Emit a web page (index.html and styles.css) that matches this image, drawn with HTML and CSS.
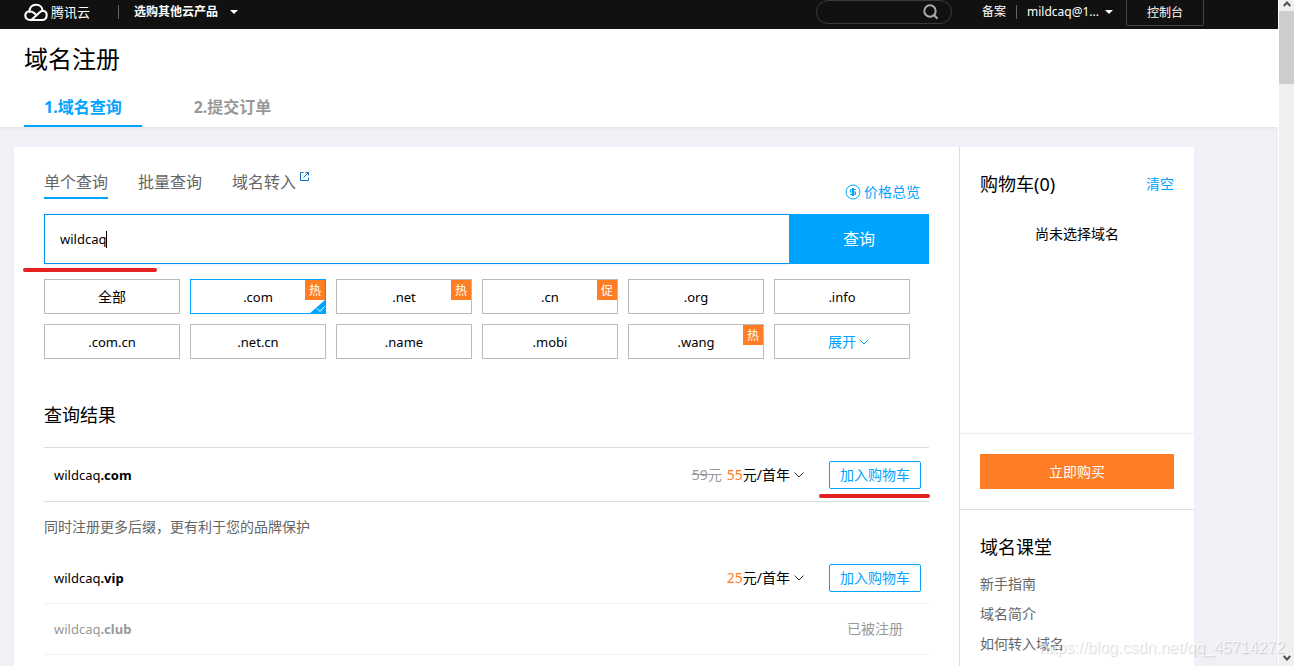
FILE: index.html
```html
<!DOCTYPE html>
<html lang="zh-CN">
<head>
<meta charset="utf-8">
<meta name="viewport" content="width=device-width, initial-scale=1">
<title>域名注册</title>
<link rel="stylesheet" href="styles.css">
</head>
<body>
<div class="window">
  <div class="page">
    <header class="topbar">
      <a class="brand" href="#">
        <svg class="brand-cloud" viewBox="0 0 24 19" width="24" height="19" fill="none" stroke="#fff" stroke-width="2.1" stroke-linecap="round" stroke-linejoin="round"><path d="M5.500 9C5.300 4.500 8 1.700 12 1.700s6.400 2.800 6.500 6.100c2.600.2 4.200 2 4.200 4.500 0 2.700-2 4.700-4.700 4.700H6.200c-2.900 0-4.900-1.800-4.900-4.400C1.300 10 3 8.300 5.700 8.200c2.200 0 3.600 1 5 2.400l1.800 1.800M7.500 16.700l8.300-7.400c.8-.8 1.600-1.200 2.700-1.500"/></svg>
        <span>腾讯云</span>
      </a>
      <button class="products" type="button">选购其他云产品 <i class="caret-down"></i></button>
      <form class="site-search">
        <input type="search" aria-label="搜索">
        <svg viewBox="0 0 16 16" width="16" height="16" fill="none" stroke="#aaa" stroke-width="2"><circle cx="7" cy="7" r="5.700"/><path d="M11 11l3.500 3.700"/></svg>
      </form>
      <a class="top-link" href="#">备案</a>
      <button class="account" type="button">mildcaq@1... <i class="caret-down"></i></button>
      <a class="console" href="#">控制台</a>
    </header>

    <section class="page-head">
      <h1>域名注册</h1>
      <ol class="steps">
        <li class="step active">1.域名查询</li>
        <li class="step">2.提交订单</li>
      </ol>
    </section>

    <div class="panel">
      <main class="main">
        <div class="main-head">
          <nav class="modes">
            <a class="mode active" href="#">单个查询</a>
            <a class="mode" href="#">批量查询</a>
            <a class="mode" href="#">域名转入<svg class="external" viewBox="0 0 9 9" width="9" height="9" fill="none" stroke="#0a72c8"><path d="M3.500.5h-3v8h8v-3M5.500.5h3v3M8.500.5L3.500 5.500"/></svg></a>
          </nav>
          <a class="price-link" href="#"><svg viewBox="0 0 16 16" width="16" height="16" fill="none" stroke="#00a4ff"><circle cx="8" cy="8" r="7"/><path d="M11 5.500H5.500v2.500M5 8h6M10.500 8v2.500H5M7.500 4v8M8.500 4v8"/></svg>价格总览</a>
        </div>

        <form class="query">
          <input class="query-input" type="text" value="wildcaq" aria-label="域名">
          <i class="text-caret"></i>
          <button class="query-button" type="button">查询</button>
          <i class="mark mark-query"></i>
        </form>

        <div class="suffixes">
          <button class="suffix" type="button"><span class="zh">全部</span></button>
          <button class="suffix selected" type="button">.com<span class="badge">热</span><svg class="tick" viewBox="0 0 17 15" width="17" height="15"><path d="M17 0v15H0z" fill="#00a4ff"/><path d="M8 9.500l3 3L15.500 7.500" fill="none" stroke="#fff"/></svg></button>
          <button class="suffix" type="button">.net<span class="badge">热</span></button>
          <button class="suffix" type="button">.cn<span class="badge">促</span></button>
          <button class="suffix" type="button">.org</button>
          <button class="suffix" type="button">.info</button>
          <button class="suffix" type="button">.com.cn</button>
          <button class="suffix" type="button">.net.cn</button>
          <button class="suffix" type="button">.name</button>
          <button class="suffix" type="button">.mobi</button>
          <button class="suffix" type="button">.wang<span class="badge">热</span></button>
          <button class="suffix more" type="button"><span class="zh">展开</span><svg viewBox="0 0 10 6" width="10" height="6" fill="none" stroke="currentColor"><path d="M.5.5L5 5 9.500.5"/></svg></button>
        </div>

        <h2 class="results-title">查询结果</h2>
        <div class="result primary">
          <div class="domain">wildcaq<b>.com</b></div>
          <button class="price" type="button"><del>59元</del> <em>55</em>元/首年<svg viewBox="0 0 10 6" width="10" height="6" fill="none" stroke="#333"><path d="M.5.5L5 5 9.500.5"/></svg></button>
          <div class="action"><button class="add" type="button">加入购物车</button><i class="mark mark-add"></i></div>
        </div>
        <p class="hint">同时注册更多后缀，更有利于您的品牌保护</p>
        <div class="result">
          <div class="domain">wildcaq<b>.vip</b></div>
          <button class="price" type="button"><em>25</em>元/首年<svg viewBox="0 0 10 6" width="10" height="6" fill="none" stroke="#333"><path d="M.5.5L5 5 9.500.5"/></svg></button>
          <div class="action"><button class="add" type="button">加入购物车</button></div>
        </div>
        <div class="result taken">
          <div class="domain">wildcaq<b>.club</b></div>
          <div class="action">已被注册</div>
        </div>
      </main>

      <aside class="side">
        <section class="cart">
          <div class="cart-head"><h2>购物车(0)</h2><a href="#">清空</a></div>
          <p>尚未选择域名</p>
        </section>
        <section class="checkout"><button type="button">立即购买</button></section>
        <section class="lessons">
          <h2>域名课堂</h2>
          <a href="#">新手指南</a>
          <a href="#">域名简介</a>
          <a href="#">如何转入域名</a>
        </section>
      </aside>
    </div>
  </div>

  <div class="scrollbar">
    <svg viewBox="0 0 8 6" width="8" height="6" fill="none" stroke="#505050" stroke-width="2"><path d="M.7 5L4 1.500 7.300 5"/></svg>
    <div class="thumb"></div>
    <svg viewBox="0 0 8 6" width="8" height="6" fill="none" stroke="#505050" stroke-width="2"><path d="M.7 1L4 4.500 7.300 1"/></svg>
  </div>
  <div class="watermark">https://blog.csdn.net/qq_45714272</div>
</div>
</body>
</html>
```

FILE: styles.css
```css
* { box-sizing: border-box; }

body {
  margin: 0;
  background: #eff1f6;
  color: #000;
  font-family: "Noto Sans", "Noto Sans CJK SC", sans-serif;
  font-size: 14px;
  line-height: 20px;
}

a { color: inherit; text-decoration: none; }
button { margin: 0; padding: 0; border: 0; background: none; color: inherit; font: inherit; cursor: pointer; }
h1, h2, p, ol { margin: 0; padding: 0; font-weight: 400; }
svg { flex: none; }

.window { position: relative; display: flex; height: 100vh; overflow: hidden; }
.page { flex: 1; min-width: 0; }

/* Top bar */
.topbar {
  display: flex;
  align-items: center;
  height: 29px;
  padding: 0 74px 5px 24px;
  background: #111;
  color: #fff;
  font-size: 12px;
}
.brand { display: flex; align-items: center; gap: 3px; padding-right: 28px; font-size: 13px; }
.products { display: flex; align-items: center; gap: 12px; padding-left: 15px; border-left: 1px solid #666; line-height: 14px; font-weight: 700; }
.caret-down { border: 4px solid transparent; border-top-color: #fff; border-bottom: 0; }
.site-search { display: flex; align-items: center; width: 136px; height: 24px; margin-left: auto; margin-right: 30px; padding: 0 12px; border: 1px solid #3a3a3a; border-radius: 12px; }
.site-search input { flex: 1; min-width: 0; border: 0; background: none; color: #fff; outline: 0; appearance: none; }
.top-link { padding-right: 10px; border-right: 1px solid #666; line-height: 14px; }
.account { display: flex; align-items: center; gap: 6px; margin: 0 13px 0 10px; }
.console { width: 78px; height: 28px; align-self: flex-end; margin-bottom: -2px; padding-top: 4px; border: 1px solid #444; border-radius: 2px; text-align: center; }

/* Page heading */
.page-head { padding: 15px 24px 0; background: #fff; box-shadow: 0 1px 3px rgba(0, 0, 0, .06); }
.page-head h1 { font-size: 24px; line-height: 30px; }
.steps { display: flex; gap: 32px; margin-top: 13px; list-style: none; }
.step { height: 40px; padding: 0 20px; border-bottom: 2px solid transparent; color: #999; font-size: 16px; font-weight: 700; line-height: 40px; }
.step.active { border-color: #00a4ff; color: #00a4ff; }

/* Panel */
.panel { display: flex; max-width: 1180px; min-height: 640px; margin: 20px 14px 0; background: #fff; }
.main { flex: 1; min-width: 0; padding: 20px 30px; }
.main-head { display: flex; justify-content: space-between; height: 47px; }
.modes { display: flex; gap: 30px; }
.mode { display: flex; height: 32px; color: #666; font-size: 16px; line-height: 30px; }
.mode.active { border-bottom: 2px solid #00a4ff; }
.external { margin: 5px 0 0 4px; }
.price-link { display: flex; align-items: center; gap: 3px; height: 20px; margin: 15px 9px 0 0; color: #00a4ff; }

.query { position: relative; display: flex; height: 50px; }
.query-input { flex: 1; min-width: 0; padding: 0 15px; border: 1px solid #0095ea; border-right: 0; outline: 0; box-shadow: 0 0 3px rgba(0, 110, 255, .2); color: #000; font-family: inherit; font-size: 13px; }
.query-button { width: 140px; background: #00a4ff; color: #fff; font-size: 16px; }
.text-caret { position: absolute; left: 62px; top: 17px; width: 1px; height: 17px; background: #000; }
.mark { position: absolute; height: 4px; border-radius: 2px; background: #e52222; }
.mark-query { left: -21px; top: 54px; width: 134px; }

.suffixes { display: grid; grid-template-columns: repeat(6, 1fr); gap: 10px; margin: 15px 19px 0 0; }
.suffix { position: relative; height: 35px; border: 1px solid #bbb; font-size: 13px; }
.suffix.selected { border-color: #00a4ff; }
.zh { font-size: 14px; }
.badge { position: absolute; top: 0; right: 0; width: 20px; height: 20px; background: #ff7d24; color: #fff; font-size: 12px; line-height: 22px; }
.tick { position: absolute; right: -1px; bottom: -1px; }
.more { display: flex; align-items: center; justify-content: center; gap: 3px; padding-left: 13px; color: #00a4ff; }

.results-title { padding: 41px 0 17px; border-bottom: 1px solid #ddd; font-size: 18px; line-height: 30px; }
.result { display: flex; align-items: center; height: 51px; padding: 0 8px 0 10px; border-bottom: 1px solid #f0f0f0; }
.result.primary { height: 54px; border-color: #ddd; }
.domain { flex: 1; font-size: 13px; }
.price { display: flex; align-items: center; white-space: pre; }
.price del { margin-right: 5px; color: #999; }
.price em { color: #ff7d24; font-style: normal; }
.price svg { margin: 0 25px 0 4px; }
.action { position: relative; width: 92px; text-align: center; }
.add { display: block; width: 100%; height: 28px; border: 1px solid #00a4ff; border-radius: 2px; color: #00a4ff; }
.mark-add { left: -10px; top: 33px; width: 111px; }
.hint { padding: 15px 0; color: #666; }
.hint + .result { height: 52px; }
.taken { color: #999; }

/* Side column */
.side { width: 235px; border-left: 1px solid #ddd; }
.side h2 { font-size: 18px; line-height: 24px; }
.cart { height: 287px; padding: 25px 20px; border-bottom: 1px solid #eee; }
.cart-head { display: flex; align-items: center; justify-content: space-between; }
.cart-head a { color: #00a4ff; }
.cart p { margin-top: 28px; text-align: center; }
.checkout { padding: 20px; border-bottom: 1px solid #ddd; }
.checkout button { width: 100%; height: 35px; background: #ff7d24; color: #fff; }
.lessons { display: flex; flex-direction: column; gap: 10px; padding: 25px 20px; color: #666; }
.lessons h2 { margin-bottom: 5px; color: #000; }

/* Window scrollbar */
.scrollbar { display: flex; flex-direction: column; align-items: center; width: 16px; padding: 1px 0 5px; border-left: 1px solid #fff; background: #f0f0f0; }
.thumb { width: 100%; height: 73px; margin: 4px 0 auto; background: #cdcdcd; }

.watermark { position: absolute; right: 9px; bottom: 8px; color: rgba(255, 255, 255, .7); font-family: "Liberation Sans", Arial, sans-serif; font-size: 16px; text-shadow: 1px 1px 1px rgba(0, 0, 0, .16); }
```
